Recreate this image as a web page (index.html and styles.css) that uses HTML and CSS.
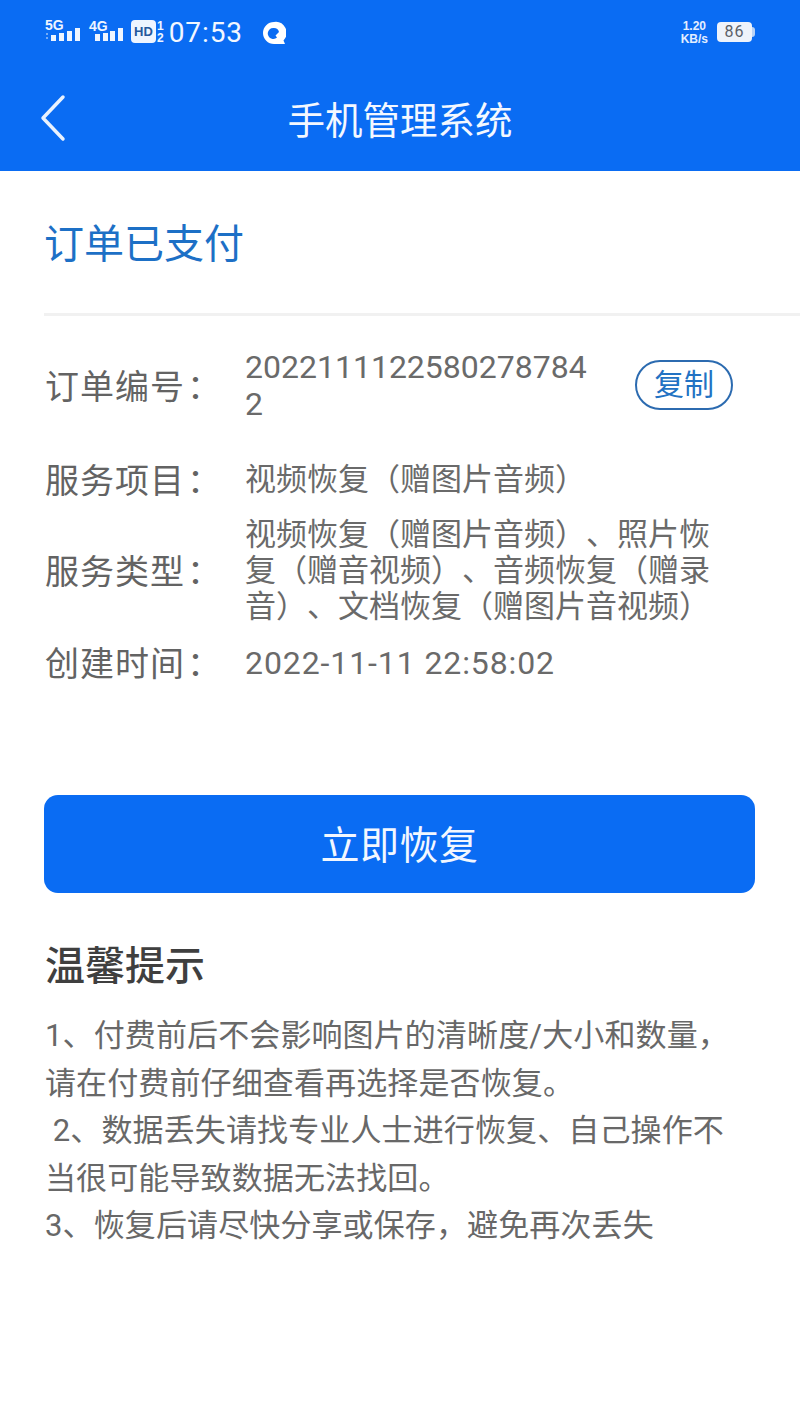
FILE: index.html
```html
<!DOCTYPE html>
<html lang="zh-CN">
<head>
<meta charset="utf-8">
<title>手机管理系统</title>
<link rel="stylesheet" href="styles.css">
</head>
<body>
<header class="top">
  <div class="status">
    <div class="status-left">
      <div class="net"><span class="net-label">5G</span>
        <svg class="bars" width="36" height="14" viewBox="0 0 36 14"><path fill="#dbe9fb" d="M0 6h2v2H0zM0 10h2v2H0z" opacity=".5"/><rect x="5" y="8" width="5" height="6"/><rect x="13" y="6" width="5" height="8"/><rect x="21" y="4" width="5" height="10"/><rect x="29" y="1" width="5" height="13"/></svg>
      </div>
      <div class="net net-second"><span class="net-label">4G</span>
        <svg class="bars" width="30" height="14" viewBox="0 0 30 14"><rect x="0" y="7" width="5" height="7"/><rect x="8" y="6" width="5" height="8"/><rect x="15" y="4" width="5" height="10"/><rect x="23" y="1" width="5" height="13"/></svg>
      </div>
      <div class="hd"><span class="hd-box">HD</span><span class="hd-side"><i>1</i><i>2</i></span></div>
      <span class="time">07:53</span>
      <svg class="q-icon" width="24" height="24" viewBox="0 0 24 24"><path fill="#fff" fill-rule="evenodd" d="M12 1a11 11 0 1 0 0 22h11l-1.500-3.500A11 11 0 0 0 12 1zm0 6a5.200 5.200 0 0 1 5 4l-3.500 3.500 1.500 2A5.500 5.500 0 1 1 12 7z"/></svg>
    </div>
    <div class="status-right">
      <div class="speed"><span>1.20</span><span>KB/s</span></div>
      <div class="battery"><span class="battery-body">86</span><span class="battery-tip"></span></div>
    </div>
  </div>
  <div class="nav">
    <svg class="back" width="30" height="48" viewBox="0 0 30 48"><path d="M24 3 4 24l20 21" fill="none" stroke="#e9f2fe" stroke-width="3.500" stroke-linecap="round" stroke-linejoin="round"/></svg>
    <h1 class="nav-title">手机管理系统</h1>
  </div>
</header>

<main class="content">
  <h2 class="order-state">订单已支付</h2>
  <div class="divider"></div>

  <section class="details">
    <div class="row row-order">
      <span class="label">订单编号<span class="colon">：</span></span>
      <span class="value value-id">2022111122580278784<br>2</span>
      <button class="copy">复制</button>
    </div>
    <div class="row row-item">
      <span class="label">服务项目<span class="colon">：</span></span>
      <span class="value">视频恢复（赠图片音频）</span>
    </div>
    <div class="row row-type">
      <span class="label">服务类型<span class="colon">：</span></span>
      <span class="value value-multi">视频恢复（赠图片音频）、照片恢复（赠音视频）、音频恢复（赠录音）、文档恢复（赠图片音视频）</span>
    </div>
    <div class="row row-time">
      <span class="label">创建时间<span class="colon">：</span></span>
      <span class="value">2022-11-11 22:58:02</span>
    </div>
  </section>

  <button class="restore">立即恢复</button>

  <h3 class="tips-title">温馨提示</h3>
  <p class="tips">1、付费前后不会影响图片的清晰度/大小和数量，<br>请在付费前仔细查看再选择是否恢复。<br>&nbsp;2、数据丢失请找专业人士进行恢复、自己操作不当很可能导致数据无法找回。<br>3、恢复后请尽快分享或保存，避免再次丢失</p>
</main>
</body>
</html>
```

FILE: styles.css
```css
* { box-sizing: border-box; }

html, body {
  margin: 0;
  padding: 0;
  background: #fff;
}

body {
  width: 800px;
  height: 1422px;
  overflow: hidden;
  font-family: "Roboto", "Noto Sans CJK SC", "Noto Sans", sans-serif;
  color: #5c5c5c;
  text-spacing-trim: space-all;
}

.top {
  height: 171px;
  background: #0a6cf3;
  color: #fff;
}

.status {
  height: 66px;
  padding: 17px 45px 0 45px;
  display: flex;
  justify-content: space-between;
  align-items: flex-start;
}

.status-left, .status-right {
  display: flex;
  align-items: flex-start;
}

.net {
  position: relative;
  width: 37px;
  height: 27px;
}

.net-second { margin-left: 7px; width: 36px; }

.net-label {
  position: absolute;
  left: 0;
  top: 0;
  font: 700 14px/16px "Liberation Sans", sans-serif;
  color: #eef5ff;
}

.net-second .net-label { left: 0; top: 1px; }

.bars {
  position: absolute;
  right: 0;
  bottom: 3px;
  fill: #eef5ff;
}

.net-second .bars { right: 0; }

.hd {
  margin-left: 6px;
  display: flex;
  align-items: flex-start;
  height: 24px;
  margin-top: 3px;
}

.hd-box {
  width: 25px;
  height: 23px;
  background: #eef5ff;
  border-radius: 4px;
  color: #25589c;
  font: 700 13px/23px "Liberation Sans", sans-serif;
  text-align: center;
}

.hd-side {
  display: flex;
  flex-direction: column;
  margin-left: 1px;
  color: #eef5ff;
}

.hd-side i {
  font: 700 12px/12px "Liberation Sans", sans-serif;
}

.time {
  margin-left: 5px;
  font: 400 28px/32px "Roboto", sans-serif;
  letter-spacing: 0.9px;
  color: #f2f7ff;
}

.q-icon { margin-left: 19px; margin-top: 4px; }

.speed {
  display: flex;
  flex-direction: column;
  align-items: center;
  font: 700 12px/13px "Liberation Sans", sans-serif;
  color: #e3eeff;
  margin-top: 3px;
}

.battery {
  margin-left: 9px;
  margin-top: 5px;
  display: flex;
  align-items: center;
}

.battery-body {
  width: 35px;
  height: 20px;
  border-radius: 4px;
  background: #eef3fb;
  color: #5a5f68;
  font: 400 16px/20px "Roboto", sans-serif;
  text-align: center;
  letter-spacing: 1px;
}

.battery-tip {
  width: 3px;
  height: 10px;
  background: #b9d3f6;
  border-radius: 0 3px 3px 0;
}

.nav {
  position: relative;
  height: 105px;
  display: flex;
  align-items: center;
  justify-content: center;
  padding-top: 4px;
}

.back {
  position: absolute;
  left: 39px;
  top: 28px;
}

.nav-title {
  margin: 0;
  font-size: 37.500px;
  font-weight: 400;
  line-height: 48px;
  color: #f4f8ff;
}

.content { padding: 0 45px; }

.order-state {
  margin: 0 0 0 -1px;
  padding-top: 47px;
  font-size: 40px;
  font-weight: 400;
  line-height: 54px;
  color: #1d70c6;
}

.divider {
  height: 3px;
  margin: 41px -45px 0 -1px;
  background: #f1f1f1;
}

.details { padding-top: 33px; }

.row {
  display: flex;
  align-items: center;
}

.row-item { margin-top: 35px; }
.row-type { margin-top: 15px; }
.row-time { margin-top: 16px; }

.label {
  flex: none;
  width: 200px;
  padding-top: 1px;
  margin-bottom: -1px;
  font-size: 34px;
  letter-spacing: 1px;
  line-height: 44px;
  color: #636363;
}

.colon { margin-left: 2px; }

.value {
  font-size: 31px;
  line-height: 36px;
  color: #6a6a6a;
}

.value-id {
  width: 345px;
  line-height: 37px;
  font-size: 32px;
}

.value-multi { width: 480px; }

.row-time .value {
  font-size: 32px;
  letter-spacing: 0.9px;
}

.copy {
  margin: 0 0 3px 45px;
  width: 98px;
  height: 50px;
  padding: 0;
  background: #fff;
  border: 2px solid #2c6bb0;
  border-radius: 26px;
  color: #2272c3;
  font-family: inherit;
  font-size: 30px;
  line-height: 44px;
}

.restore {
  display: block;
  width: 711px;
  height: 98px;
  margin: 110px 0 0 -1px;
  padding: 0 0 4px;
  border: 0;
  border-radius: 14px;
  background: #0a6cf3;
  color: #f2f7ff;
  font-family: inherit;
  font-size: 39px;
  letter-spacing: 0.5px;
}

.tips-title {
  margin: 46px 0 0;
  font-size: 40px;
  font-weight: 500;
  line-height: 56px;
  color: #3f3f3f;
}

.tips {
  margin: 17px 0 0;
  width: 690px;
  font-size: 31px;
  letter-spacing: 0.12px;
  line-height: 47.500px;
  color: #686868;
}
```
